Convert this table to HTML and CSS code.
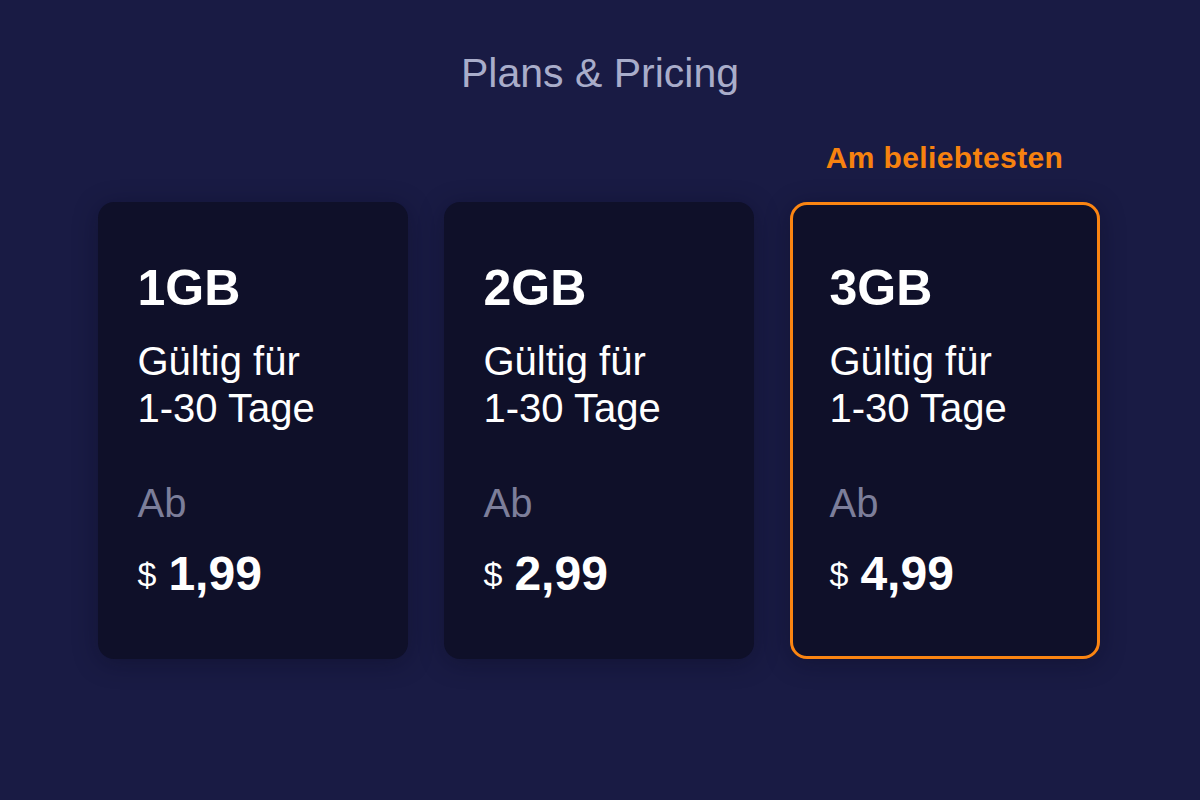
FILE: index.html
```html
<!DOCTYPE html>
<html lang="de">
<head>
<meta charset="utf-8">
<title>Plans &amp; Pricing</title>
<link rel="stylesheet" href="styles.css">
</head>
<body>
<main class="page">
  <h1 class="title">Plans &amp; Pricing</h1>
  <div class="plans">
    <div class="plan">
      <div class="badge-slot"></div>
      <div class="card">
        <div class="size">1GB</div>
        <div class="validity">Gültig für<br>1-30 Tage</div>
        <div class="from">Ab</div>
        <div class="price"><span class="cur">$</span><span class="amount">1,99</span></div>
      </div>
    </div>
    <div class="plan">
      <div class="badge-slot"></div>
      <div class="card">
        <div class="size">2GB</div>
        <div class="validity">Gültig für<br>1-30 Tage</div>
        <div class="from">Ab</div>
        <div class="price"><span class="cur">$</span><span class="amount">2,99</span></div>
      </div>
    </div>
    <div class="plan">
      <div class="badge-slot"><span class="badge">Am beliebtesten</span></div>
      <div class="card card-featured">
        <div class="size">3GB</div>
        <div class="validity">Gültig für<br>1-30 Tage</div>
        <div class="from">Ab</div>
        <div class="price"><span class="cur">$</span><span class="amount">4,99</span></div>
      </div>
    </div>
  </div>
</main>
</body>
</html>
```
FILE: styles.css
```css
* { box-sizing: border-box; }
html, body {
  margin: 0;
  padding: 0;
  width: 1200px;
  height: 800px;
  background: #191b44;
  font-family: "Liberation Sans", Arial, sans-serif;
  overflow: hidden;
}
.page {
  display: flex;
  flex-direction: column;
  align-items: center;
  padding-top: 50px;
}
.title {
  margin: 0;
  font-size: 41px;
  line-height: 46px;
  font-weight: 400;
  color: #a9adca;
}
.plans {
  display: flex;
  gap: 36px;
  margin-top: 40px;
  margin-left: -3px;
}
.plan {
  display: flex;
  flex-direction: column;
  width: 310px;
}
.badge-slot {
  height: 66px;
  display: flex;
  justify-content: center;
  padding-top: 6px;
}
.badge {
  font-size: 30px;
  line-height: 32px;
  font-weight: 700;
  color: #f7820f;
  letter-spacing: 0.4px;
}
.card {
  height: 457px;
  background: #0f1029;
  border: 3px solid transparent;
  border-radius: 16px;
  padding: 59px 37px 0;
  color: #ffffff;
  box-shadow: 0 4px 24px rgba(8, 9, 30, 0.35);
}
.card-featured {
  border-color: #fb8512;
  border-radius: 17px;
}
.size {
  font-size: 50px;
  line-height: 48px;
  font-weight: 700;
}
.validity {
  margin-top: 26px;
  font-size: 40px;
  line-height: 47px;
}
.from {
  margin-top: 47px;
  font-size: 40px;
  line-height: 48px;
  color: #7c7e9a;
}
.price {
  margin-top: 23px;
  line-height: 48px;
  white-space: nowrap;
}
.cur {
  font-size: 34px;
  vertical-align: 4px;
  margin-right: 12px;
}
.amount {
  font-size: 48px;
  font-weight: 700;
}
```
